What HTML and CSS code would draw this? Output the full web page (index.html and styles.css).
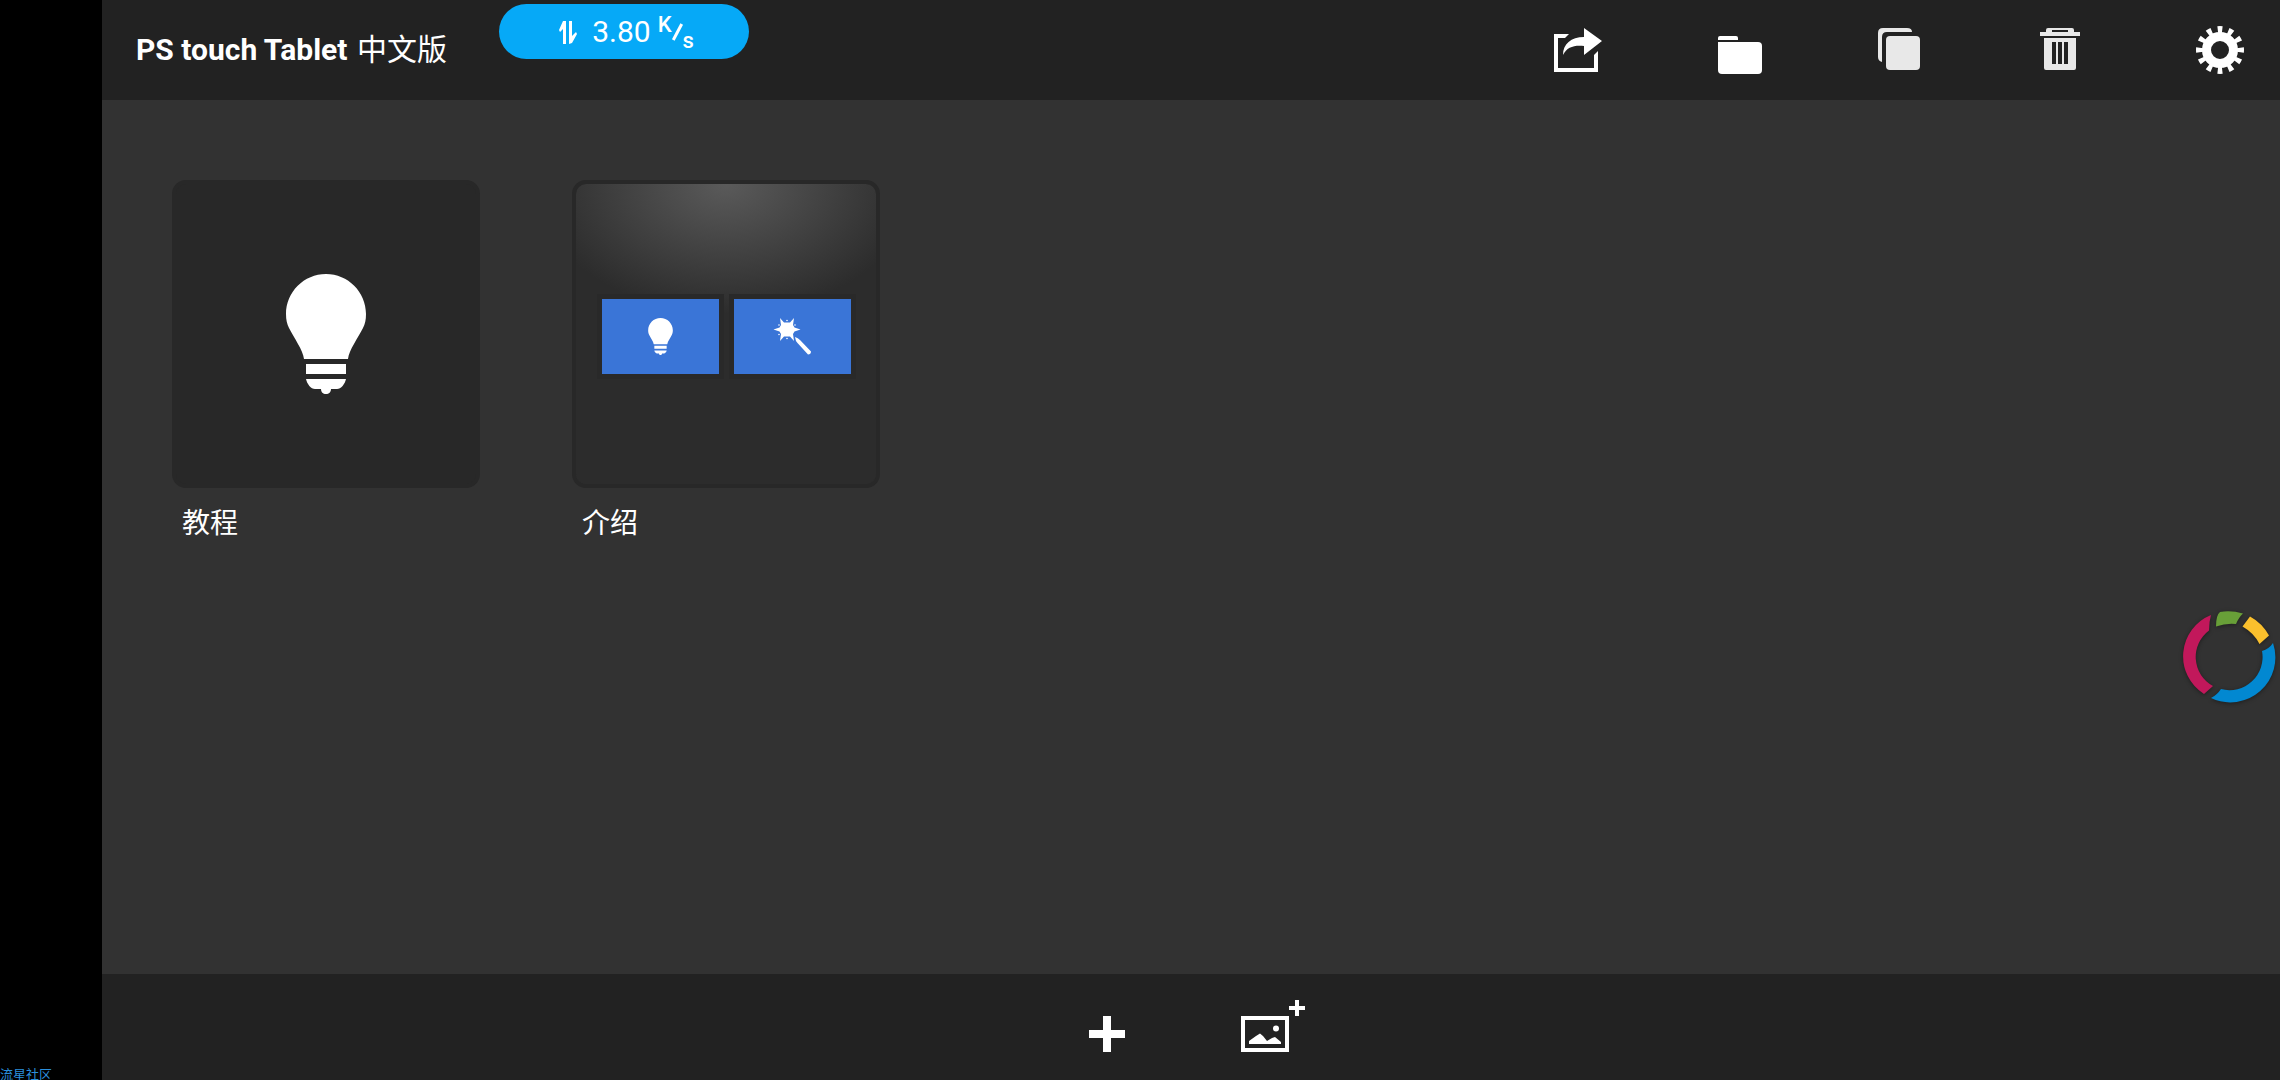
FILE: index.html
```html
<!DOCTYPE html>
<html lang="zh-CN">
<head>
    <meta charset="UTF-8">
    <meta name="viewport" content="width=device-width, initial-scale=1.0">
    <title>PS touch Tablet 中文版</title>
    <link rel="stylesheet" href="styles.css">
</head>
<body>

<!-- Shared icons -->
<svg class="defs" aria-hidden="true">
    <symbol id="bulb" viewBox="0 0 80 120">
        <path d="M40 0C62 0 80 18 80 40 80 46 79 50 77 54 72 64 63 76 62 85H18C17 76 8 64 3 54 1 50 0 46 0 40 0 18 18 0 40 0Z"/>
        <path d="M20 90h40v10H20zM20 105h40c-1 5-5 10-9 10h-6c0 3-2 5-5 5s-5-2-5-5h-6c-4 0-8-5-9-10z"/>
    </symbol>
</svg>

<aside class="side">
    <span class="watermark">流星社区</span>
</aside>

<div class="app">

    <header>
        <h1>PS touch Tablet <span>中文版</span></h1>
        <div class="toolbar">
            <button type="button" aria-label="分享">
                <svg viewBox="0 0 48 48">
                    <path d="M13 8l-4 4H2v30h36V29l4-4v21H-2V8z"/>
                    <path d="M28 2l18 13-18 14v-9C18 19 11 21 7 29 7 18 15 11 28 11z"/>
                </svg>
            </button>
            <button type="button" aria-label="文件夹">
                <svg viewBox="0 0 48 48">
                    <path d="M2 14v-2q0-2 2-2h16q2 0 2 2v2z"/>
                    <path d="M2 16h40q4 0 4 4v24q0 4-4 4H6q-4 0-4-4z"/>
                </svg>
            </button>
            <button type="button" class="dim" aria-label="复制">
                <svg viewBox="0 0 48 48">
                    <path d="M36 6H11q-5 0-5 5v25q-4-1-4-5V7q0-5 5-5h24q5 0 5 4z"/>
                    <rect x="10" y="10" width="34" height="34" rx="4"/>
                </svg>
            </button>
            <button type="button" class="dim" aria-label="删除">
                <svg viewBox="0 0 48 48" fill-rule="evenodd">
                    <path d="M4 10V6h6V4q0-2 2-2h24q2 0 2 2v2h6v4zM16 4v2h16V4z"/>
                    <path d="M8 12h32v30q0 2-2 2H10q-2 0-2-2zM16 16v22h4V16zM22 16v22h4V16zM28 16v22h4V16z"/>
                </svg>
            </button>
            <button type="button" aria-label="设置">
                <svg viewBox="0 0 48 48">
                    <circle cx="24" cy="24" r="13.5" fill="none" stroke="currentColor" stroke-width="9"/>
                    <circle cx="24" cy="24" r="20.5" fill="none" stroke="currentColor" stroke-width="7" pathLength="120" stroke-dasharray="4.4 5.6" stroke-dashoffset="2.2"/>
                </svg>
            </button>
        </div>
    </header>

    <!-- Projects -->
    <main>
        <a href="#tutorials" class="project">
            <div class="thumb">
                <svg class="bulb-large"><use href="#bulb"/></svg>
            </div>
            <p>教程</p>
        </a>
        <a href="#intro" class="project">
            <div class="thumb thumb-intro">
                <div class="tile">
                    <svg class="bulb-small"><use href="#bulb"/></svg>
                </div>
                <div class="tile">
                    <svg class="wand" viewBox="0 0 37 37">
                        <path d="M6 0l4 4.500h6L20 0l-1 7 1.500 2.500 6 2-6 2L19 16l1 7-4-4.500h-6L6 23l1-7-1.500-2.500-6-2 6-2L7 7z"/>
                        <circle cx="13" cy="2.500" r="0.800"/>
                        <circle cx="5" cy="7" r="0.800"/>
                        <circle cx="21" cy="7" r="0.800"/>
                        <circle cx="5" cy="16.500" r="0.800"/>
                        <circle cx="13" cy="20.500" r="0.800"/>
                        <path d="M21 19q3 1 5 3l11 11.500q0 3-3 3L23.500 25q-2-2-2.500-6z"/>
                    </svg>
                </div>
            </div>
            <p>介绍</p>
        </a>
    </main>

    <footer>
        <button type="button" aria-label="新建">
            <svg class="plus" viewBox="0 0 36 36"><path d="M14 0h8v14h14v8H22v14h-8V22H0v-8h14z"/></svg>
        </button>
        <button type="button" aria-label="添加图片">
            <svg class="add-image" viewBox="0 0 64 52" fill-rule="evenodd">
                <path d="M0 16h48v36H0zM4 20v28h40V20z"/>
                <path d="M8 44v-3l7-5 4-2.500 3 2.500 4 5 5-3 3-1 6 5v2z"/>
                <circle cx="35" cy="28.500" r="3"/>
                <path d="M54 0h4v6h6v4h-6v6h-4v-6h-6V6h6z"/>
            </svg>
        </button>
    </footer>

</div>

<!-- Network speed pill, floats over the header -->
<div class="speed">
    <svg viewBox="0 0 18 24"><path d="M4 1h3v23H4V9L1 12l-1-2zM10 1h3v15l4-4 1 2-5 9-3 1z"/></svg>
    <span>3.80</span>
    <span class="unit"><sup>K</sup><i></i><sub>s</sub></span>
</div>

<!-- Floating ring -->
<button type="button" class="ring" aria-label="悬浮菜单">
    <svg viewBox="0 0 92 92">
        <path fill="#c2185b" d="M28 4A44.500 44.500 0 0 0 21 83L30 75A33 33 0 0 1 26 19.500Q26 11 28 4Z"/>
        <path fill="#689f38" d="M37 1Q48-1 60 2.500 56 6 53 13 43 12 33 15.500 33 4 37 1Z"/>
        <path fill="#fbc02d" d="M67 5.500Q79 12 86 24.500L76.500 33Q71 22 59.500 15.500Z"/>
        <path fill="#0288d1" d="M90 32A45 45 0 0 1 28 87Q34 84 38 78A33 33 0 0 0 79 40Q86 38 90 32Z"/>
    </svg>
</button>

</body>
</html>
```
FILE: styles.css
```css
* {
    box-sizing: border-box;
}

body {
    display: flex;
    min-height: 100vh;
    margin: 0;
    background-color: #323232;
    color: #fff;
    font-family: Roboto, "Noto Sans CJK SC", sans-serif;
}

svg {
    display: block;
    fill: currentColor;
    overflow: visible;
}

button {
    padding: 0;
    border: none;
    background: none;
    color: inherit;
    cursor: pointer;
}

.defs {
    position: absolute;
    width: 0;
    height: 0;
}

.side {
    display: flex;
    align-items: flex-end;
    flex: 0 0 102px;
    background-color: #000;
}

.watermark {
    color: #2b8fdc;
    font-size: 13px;
    line-height: 10px;
}

.app {
    display: flex;
    flex-direction: column;
    flex: 1;
}

header {
    display: flex;
    align-items: center;
    justify-content: space-between;
    height: 100px;
    padding: 0 36px 0 34px;
    background-color: #222;
}

h1 {
    margin: 0;
    font-size: 30px;
    line-height: 40px;
    font-weight: bold;
}

h1 span {
    margin-left: 2px;
    font-weight: normal;
}

.toolbar {
    display: flex;
    gap: 112px;
}

.toolbar svg {
    width: 48px;
    height: 48px;
}

.dim {
    color: #e8e8e8;
}

main {
    display: flex;
    flex-wrap: wrap;
    align-content: flex-start;
    flex: 1;
    gap: 92px;
    padding: 80px 70px;
}

.project {
    color: #fff;
    text-decoration: none;
}

.project p {
    margin: 16px 0 0 10px;
    font-size: 28px;
    line-height: 40px;
}

.thumb {
    display: flex;
    align-items: center;
    justify-content: center;
    width: 308px;
    height: 308px;
    border: 4px solid #282828;
    border-radius: 14px;
    background-color: #282828;
}

.thumb-intro {
    gap: 15px;
    padding-top: 4px;
    background: radial-gradient(190px 130px at top, #5a5a5a, #2c2c2c) padding-box;
}

.tile {
    display: flex;
    align-items: center;
    justify-content: center;
    width: 117px;
    height: 75px;
    background-color: #3a75d7;
    box-shadow: 0 0 0 5px #292929;
}

.bulb-large {
    width: 80px;
    height: 120px;
}

.bulb-small {
    width: 25px;
    height: 37px;
}

.wand {
    width: 37px;
    height: 37px;
}

footer {
    display: flex;
    align-items: flex-end;
    justify-content: center;
    gap: 116px;
    height: 106px;
    padding: 0 0 28px 12px;
    background-color: #222;
}

.plus {
    width: 36px;
    height: 36px;
}

.add-image {
    width: 64px;
    height: 52px;
}

.speed {
    position: absolute;
    top: 4px;
    left: 499px;
    display: flex;
    align-items: center;
    justify-content: center;
    gap: 15px;
    width: 250px;
    height: 55px;
    padding-left: 5px;
    border-radius: 28px;
    background-color: #06a9f7;
    font-size: 30px;
    line-height: 36px;
}

.speed svg {
    width: 18px;
    height: 24px;
}

.unit {
    display: flex;
    align-items: center;
    margin-left: -8px;
    font-weight: 500;
}

.unit sup,
.unit sub {
    font-size: 22px;
    line-height: 22px;
}

.unit sup {
    padding-bottom: 14px;
}

.unit sub {
    padding-top: 18px;
}

.unit i {
    width: 3px;
    height: 18px;
    margin: 0 4px;
    background-color: #fff;
    transform: rotate(28deg);
}

.ring {
    position: fixed;
    top: calc(50% + 71px);
    right: 5px;
    filter: drop-shadow(0 1px 2px rgba(0, 0, 0, 0.4));
}

.ring svg {
    width: 92px;
    height: 92px;
}
```
